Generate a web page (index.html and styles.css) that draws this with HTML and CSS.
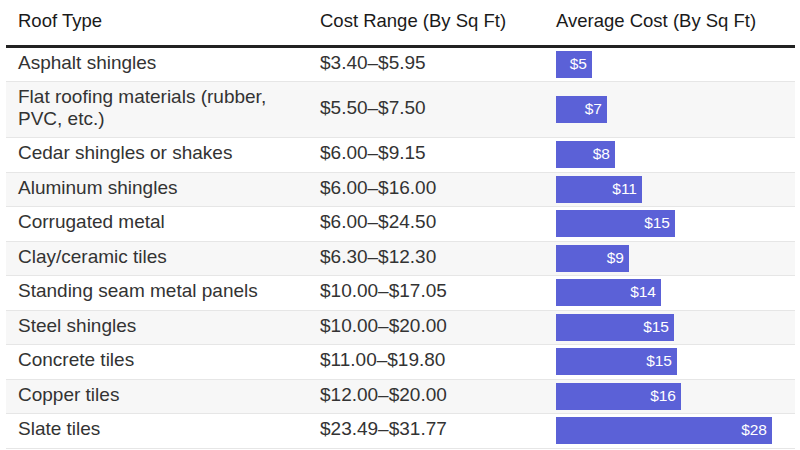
FILE: index.html
```html
<!DOCTYPE html>
<html lang="en">
<head>
<meta charset="utf-8">
<title>Roof Cost Table</title>
<link rel="stylesheet" href="styles.css">
</head>
<body>
<table class="cost-table">
  <colgroup>
    <col class="col-type">
    <col class="col-range">
    <col class="col-avg">
  </colgroup>
  <thead>
    <tr>
      <th>Roof Type</th>
      <th>Cost Range (By Sq Ft)</th>
      <th>Average Cost (By Sq Ft)</th>
    </tr>
  </thead>
  <tbody>
    <tr><td>Asphalt shingles</td><td>$3.40–$5.95</td><td class="bar-cell"><div class="bar" style="width:36px">$5</div></td></tr>
    <tr><td>Flat roofing materials (rubber, PVC, etc.)</td><td>$5.50–$7.50</td><td class="bar-cell"><div class="bar" style="width:51px">$7</div></td></tr>
    <tr><td>Cedar shingles or shakes</td><td>$6.00–$9.15</td><td class="bar-cell"><div class="bar" style="width:59px">$8</div></td></tr>
    <tr><td>Aluminum shingles</td><td>$6.00–$16.00</td><td class="bar-cell"><div class="bar" style="width:86px">$11</div></td></tr>
    <tr><td>Corrugated metal</td><td>$6.00–$24.50</td><td class="bar-cell"><div class="bar" style="width:119px">$15</div></td></tr>
    <tr><td>Clay/ceramic tiles</td><td>$6.30–$12.30</td><td class="bar-cell"><div class="bar" style="width:73px">$9</div></td></tr>
    <tr><td>Standing seam metal panels</td><td>$10.00–$17.05</td><td class="bar-cell"><div class="bar" style="width:105px">$14</div></td></tr>
    <tr><td>Steel shingles</td><td>$10.00–$20.00</td><td class="bar-cell"><div class="bar" style="width:118px">$15</div></td></tr>
    <tr><td>Concrete tiles</td><td>$11.00–$19.80</td><td class="bar-cell"><div class="bar" style="width:121px">$15</div></td></tr>
    <tr><td>Copper tiles</td><td>$12.00–$20.00</td><td class="bar-cell"><div class="bar" style="width:125px">$16</div></td></tr>
    <tr><td>Slate tiles</td><td>$23.49–$31.77</td><td class="bar-cell"><div class="bar" style="width:216px">$28</div></td></tr>
  </tbody>
</table>
</body>
</html>
```
FILE: styles.css
```css
html, body {
  margin: 0;
  padding: 0;
  background: #ffffff;
}

body {
  font-family: "Liberation Sans", Arial, Helvetica, sans-serif;
  color: #333333;
}

.cost-table {
  margin: 0 6px;
  width: 789px;
  border-collapse: collapse;
  table-layout: fixed;
  font-size: 19px;
  line-height: 21.5px;
}

.col-type { width: 302px; }
.col-range { width: 236px; }
.col-avg { width: 251px; }

.cost-table th {
  text-align: left;
  font-weight: normal;
  font-size: 18.5px;
  color: #1a1a1a;
  padding: 10px 12px 13px;
  border-bottom: 3px solid #222222;
  white-space: nowrap;
}

.cost-table td {
  padding: 4px 12px 8px;
  vertical-align: middle;
  border-bottom: 1px solid #e6e6e6;
}

.cost-table tbody tr:nth-child(even) td {
  background: #f7f7f7;
}

.cost-table td.bar-cell {
  padding: 3px 12px 3px;
}

.bar {
  box-sizing: border-box;
  height: 27px;
  background: #5b61d7;
  color: #ffffff;
  font-size: 15.5px;
  line-height: 25px;
  text-align: right;
  padding-right: 5px;
  white-space: nowrap;
}
```
